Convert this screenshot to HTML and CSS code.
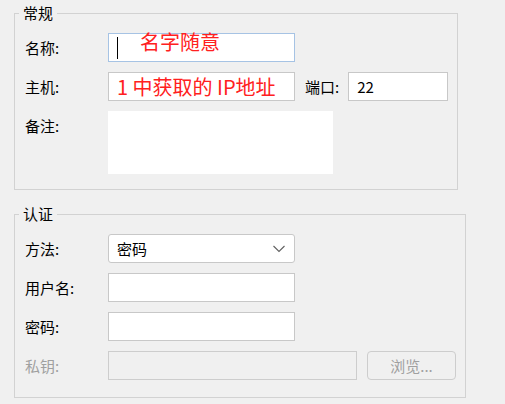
FILE: index.html
```html
<!DOCTYPE html>
<html lang="zh-CN">
<head>
<meta charset="utf-8">
<link rel="stylesheet" href="styles.css">
</head>
<body>
<div class="page">
  <section class="group group-general">
    <span class="group-title">常规</span>
    <div class="form">
      <div class="row">
        <span class="label">名称:</span>
        <div class="field field-focus w-main"><span class="caret"></span><span class="note-red name-note">名字随意</span></div>
      </div>
      <div class="row">
        <span class="label">主机:</span>
        <div class="field w-main"><span class="note-red host-note">1 中获取的 IP地址</span></div>
        <span class="label label-port">端口:</span>
        <div class="field w-port"><span class="value">22</span></div>
      </div>
      <div class="row row-top">
        <span class="label">备注:</span>
        <div class="memo"></div>
      </div>
    </div>
  </section>

  <section class="group group-auth">
    <span class="group-title">认证</span>
    <div class="form">
      <div class="row">
        <span class="label">方法:</span>
        <div class="select w-main"><span class="value">密码</span>
          <svg class="chevron" width="12" height="8" viewBox="0 0 12 8"><path d="M0.5 1 L6 6.5 L11.5 1" fill="none" stroke="#606060" stroke-width="1.1"/></svg>
        </div>
      </div>
      <div class="row">
        <span class="label">用户名:</span>
        <div class="field w-main"></div>
      </div>
      <div class="row">
        <span class="label">密码:</span>
        <div class="field w-main"></div>
      </div>
      <div class="row">
        <span class="label label-disabled">私钥:</span>
        <div class="field field-disabled w-key"></div>
        <button class="btn-browse" disabled>浏览...</button>
      </div>
    </div>
  </section>
</div>
</body>
</html>
```

FILE: styles.css
```css
* { box-sizing: border-box; }
html, body { margin: 0; padding: 0; background: #f0f0f0; }
body {
  font-family: "Microsoft YaHei UI", "Noto Sans CJK SC", "Noto Sans", sans-serif;
  font-size: 15px;
  color: #000;
  width: 505px;
  height: 404px;
  overflow: hidden;
}
.page {
  padding: 13px 0 0 14px;
}
.group {
  position: relative;
  border: 1px solid #d2d2d2;
}
.group-general {
  width: 444px;
  height: 177px;
  margin-bottom: 24px;
  padding: 19px 0 0 10px;
}
.group-auth {
  width: 452px;
  height: 184px;
  padding: 19px 0 0 10px;
}
.group-title {
  position: absolute;
  top: -11px;
  left: 4px;
  padding: 0 4px;
  background: #f0f0f0;
  line-height: 20px;
  font-size: 15px;
}
.form {
  display: flex;
  flex-direction: column;
  gap: 10px;
}
.row {
  display: flex;
  align-items: center;
  height: 29px;
}
.row-top { align-items: flex-start; height: auto; }
.label {
  width: 83px;
  flex: none;
  line-height: 29px;
  white-space: nowrap;
}
.label-port {
  width: auto;
  margin-left: 10px;
  margin-right: 9px;
}
.label-disabled { color: #a0a0a0; }
.field {
  height: 29px;
  background: #fff;
  border: 1px solid #c8c8c8;
  display: flex;
  align-items: center;
  flex: none;
  position: relative;
}
.field-focus { border-color: #a6c3e4; }
.field-disabled { background: #f0f0f0; border-color: #cdcdcd; }
.w-main { width: 187px; }
.w-port { width: 100px; }
.w-key { width: 249px; }
.value { padding-left: 8px; font-size: 15px; }
.caret {
  width: 1px;
  height: 22px;
  background: #000;
  margin-left: 8px;
}
.note-red {
  color: #ff2020;
  font-size: 20px;
  line-height: 27px;
  white-space: nowrap;
}
.name-note { margin-left: 22px; margin-top: -12px; }
.host-note { margin-left: 8px; }
.memo {
  width: 225px;
  height: 63px;
  background: #fff;
}
.select {
  height: 29px;
  background: #fff;
  border: 1px solid #c8c8c8;
  border-radius: 3px;
  display: flex;
  align-items: center;
  justify-content: space-between;
  padding-right: 9px;
}
.chevron { display: block; }
.btn-browse {
  margin-left: 10px;
  width: 89px;
  height: 29px;
  border: 1px solid #cdcdcd;
  border-radius: 4px;
  background: #f0f0f0;
  color: #a0a0a0;
  font-family: inherit;
  font-size: 15px;
  padding: 0;
}
```
